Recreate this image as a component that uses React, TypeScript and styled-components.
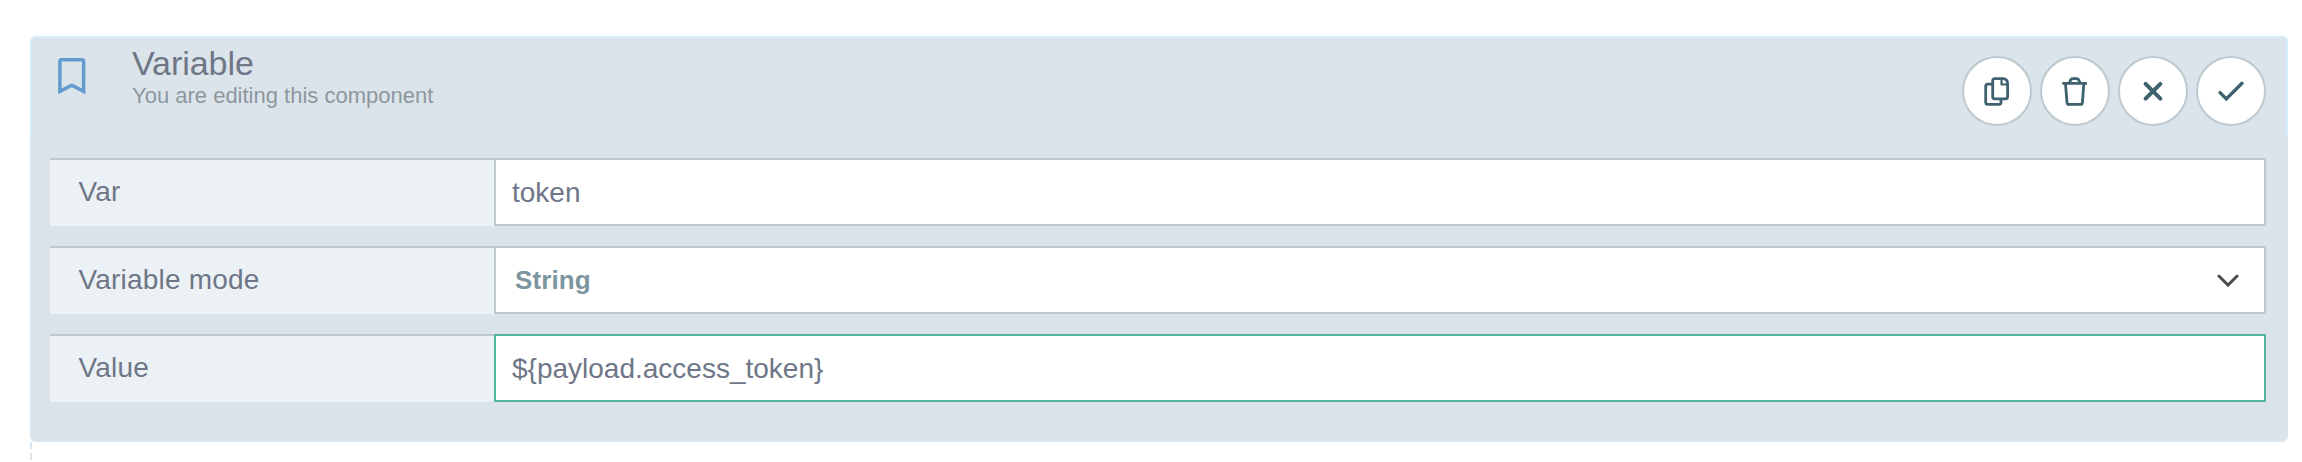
import React from 'react';
import styled, { createGlobalStyle } from 'styled-components';

const GlobalStyle = createGlobalStyle`
  * { box-sizing: border-box; }
  body {
    margin: 0;
    background: #ffffff;
    font-family: "Liberation Sans", Helvetica, Arial, sans-serif;
    color: #6e7687;
  }
`;

const Page = styled.main`
  display: flex;
  flex-direction: column;
  height: 462px;
  padding: 36px 14px 0 30px;
  overflow: hidden;
`;

const Card = styled.section`
  flex: none;
  height: 406px;
  border-radius: 6px;
  background: #dce4eb;
`;

const Header = styled.header`
  display: flex;
  align-items: flex-start;
  height: 102px;
  padding: 18px 20px 0 26px;
  border: 2px solid #d4eefc;
  border-bottom-color: transparent;
  border-radius: 6px;
`;

const BookmarkIcon = styled.svg`
  flex: none;
  width: 28px;
  height: 38px;
`;

const Heading = styled.div`
  flex: 1;
  margin: -12px 0 0 46px;
  white-space: nowrap;
`;

const Title = styled.h1`
  margin: 0;
  font-size: 34px;
  line-height: 38px;
  font-weight: 400;
  letter-spacing: -0.05px;
`;

const Subtitle = styled.p`
  margin: 1px 0 0;
  font-size: 22px;
  line-height: 26px;
  color: #8d979e;
`;

const Actions = styled.div`
  display: flex;
  gap: 8px;
`;

const RoundButton = styled.button`
  width: 70px;
  height: 70px;
  padding: 0;
  border: 2px solid #bdc8cf;
  border-radius: 50%;
  background: #ffffff;
  color: #3f626f;

  svg {
    display: block;
    width: 70px;
    height: 70px;
    margin: -2px;
  }
`;

const Fields = styled.div`
  display: flex;
  flex-direction: column;
  gap: 20px;
  padding: 20px 22px 0 20px;
`;

const Row = styled.div`
  display: flex;
  height: 68px;
`;

const Label = styled.label`
  width: 444px;
  padding-left: 28.5px;
  border-top: 2px solid #bdc8cf;
  background: #ecf1f5;
  font-size: 28px;
  line-height: 64px;
  letter-spacing: 0.2px;
`;

const Control = styled.div<{ $focused?: boolean }>`
  display: flex;
  flex: 1;
  align-items: center;
  justify-content: space-between;
  padding: 0 25px 0 16px;
  border: 2px solid ${(p) => (p.$focused ? '#51b89c' : '#bdc8cf')};
  background: #ffffff;
`;

const Value = styled.span`
  padding-top: 2px;
  font-size: 28px;
  line-height: 62px;
`;

const Selected = styled.span`
  padding-left: 3px;
  font-size: 26px;
  line-height: 62px;
  font-weight: 700;
  letter-spacing: 0.1px;
  color: #7d959e;
`;

const Chevron = styled.svg`
  width: 22px;
  height: 14px;
  margin-top: 2px;
`;

const Connector = styled.div`
  width: 2px;
  height: 20px;
  background: repeating-linear-gradient(#d9e6ef 0 7px, transparent 7px 11px);
`;

const line = {
  fill: 'none',
  stroke: 'currentColor',
  strokeLinejoin: 'round' as const,
};

export default function App() {
  return (
    <>
      <GlobalStyle />
      <Page>
        <Card>
          <Header>
            <BookmarkIcon viewBox="0 0 28 38">
              <path
                d="M1.9 35.4V5.5Q1.9 3.8 3.6 3.8H23.9Q25.6 3.8 25.6 5.5V35.4L13.75 29.3Z"
                fill="none"
                stroke="#629bce"
                strokeWidth="3.5"
              />
            </BookmarkIcon>
            <Heading>
              <Title>Variable</Title>
              <Subtitle>You are editing this component</Subtitle>
            </Heading>
            <Actions>
              <RoundButton aria-label="Copy">
                <svg viewBox="0 0 70 70" {...line} strokeWidth="2.8">
                  <path d="M30 28.1H25.8Q23.7 28.1 23.7 30.2V46.3Q23.7 48.4 25.8 48.4H36.8Q39 48.4 39 46.3V43" />
                  <path d="M41 22.7H32.8Q30.7 22.7 30.7 24.8V40.7Q30.7 42.8 32.8 42.8H43.5Q45.6 42.8 45.6 40.7V27.6Q45.4 22.9 41 22.7Z" />
                  <path d="M39.5 23V28.5H45.4" strokeWidth="2.2" />
                </svg>
              </RoundButton>
              <RoundButton aria-label="Delete">
                <svg viewBox="0 0 70 70" {...line} strokeWidth="2.8">
                  <path d="M22.3 27.4H46.9M25.5 28L27 46.6Q27.1 48.4 28.9 48.4H40.6Q42.3 48.4 42.4 46.6L43.8 28" />
                  <path d="M29.6 26.8Q30.4 22.7 33 22.7H36.4Q39 22.7 39.8 26.8" />
                </svg>
              </RoundButton>
              <RoundButton aria-label="Cancel">
                <svg viewBox="0 0 70 70" {...line} strokeWidth="4">
                  <path d="M27.6 27.8L42.4 42.6M42.4 27.8L27.6 42.6" strokeLinecap="round" />
                </svg>
              </RoundButton>
              <RoundButton aria-label="Confirm">
                <svg viewBox="0 0 70 70" {...line} strokeLinejoin="miter" strokeWidth="3.4">
                  <path d="M24 36.6L30.3 42.9L46 27.2" strokeLinecap="round" />
                </svg>
              </RoundButton>
            </Actions>
          </Header>
          <Fields>
            <Row>
              <Label>Var</Label>
              <Control>
                <Value>token</Value>
              </Control>
            </Row>
            <Row>
              <Label>Variable mode</Label>
              <Control>
                <Selected>String</Selected>
                <Chevron viewBox="0 0 22 14">
                  <path d="M1.9 2L11 11.1L20.1 2" fill="none" stroke="#4b4b4d" strokeWidth="2.9" strokeLinecap="round" />
                </Chevron>
              </Control>
            </Row>
            <Row>
              <Label>Value</Label>
              <Control $focused>
                <Value>{'${payload.access_token}'}</Value>
              </Control>
            </Row>
          </Fields>
        </Card>
        <Connector />
      </Page>
    </>
  );
}
